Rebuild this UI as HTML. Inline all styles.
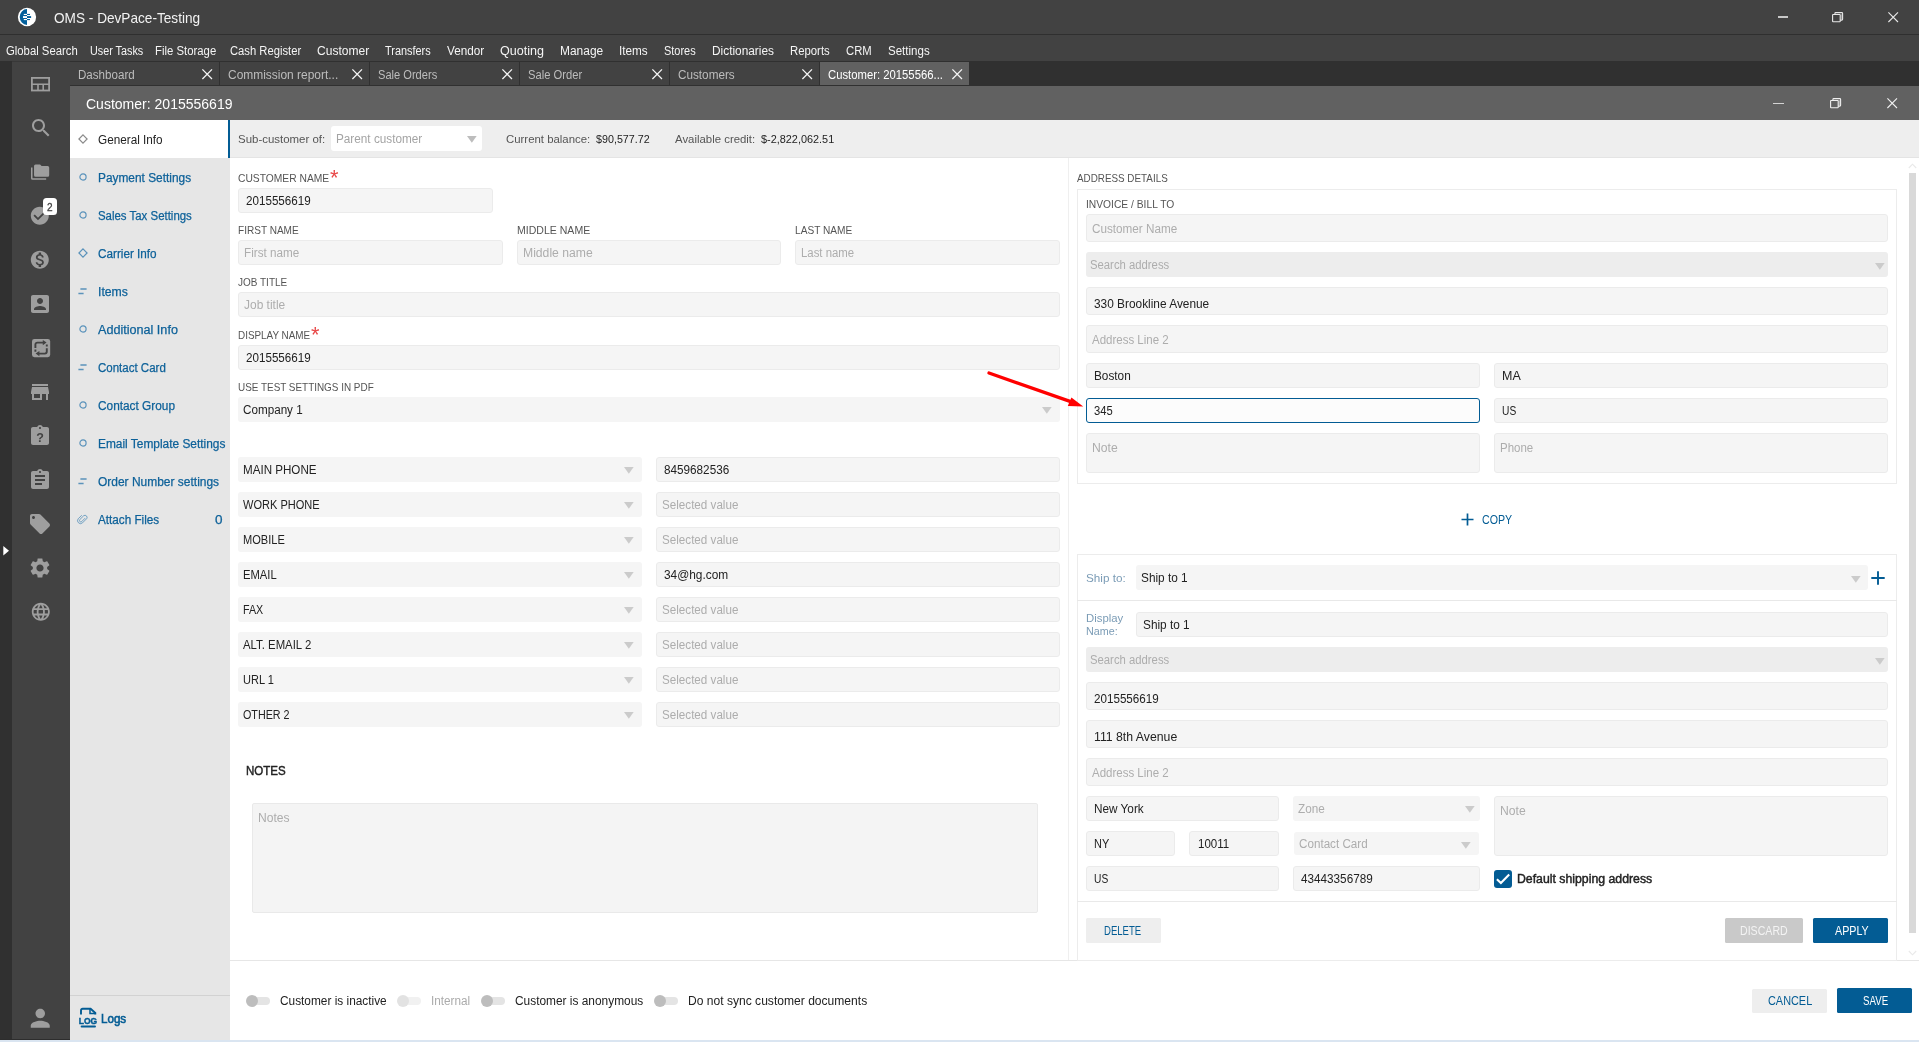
<!DOCTYPE html>
<html lang="en"><head><meta charset="utf-8"><title>OMS - DevPace-Testing</title>
<style>
html,body{margin:0;padding:0;}
body{width:1919px;height:1042px;overflow:hidden;background:#ffffff;position:relative;
font-family:"Liberation Sans",sans-serif;}
#app{position:absolute;left:0;top:0;width:1919px;height:1042px;overflow:hidden;will-change:transform;}
#app>div,#app>span,#app>svg{position:absolute;display:block;}
#app>span{white-space:pre;transform-origin:0 0;}
svg{overflow:visible;}
</style></head><body><div id="app">
<div style="left:0px;top:0px;width:1919px;height:34px;background:#424242;"></div>
<div style="left:0px;top:34px;width:1919px;height:1px;background:#2f2f2f;"></div>
<div style="left:0px;top:35px;width:1919px;height:26px;background:#424242;"></div>
<div style="left:0px;top:61px;width:12px;height:979px;background:#303030;"></div>
<div style="left:12px;top:61px;width:58px;height:979px;background:#424242;"></div>
<div style="left:70px;top:61px;width:1849px;height:25px;background:#303030;"></div>
<div style="left:12px;top:61px;width:58px;height:1px;background:#383838;"></div>
<div style="left:70px;top:86px;width:1849px;height:34px;background:#616161;"></div>
<div style="left:70px;top:120px;width:160px;height:920px;background:#e6e6e6;"></div>
<div style="left:230px;top:120px;width:1689px;height:38px;background:#eeeeee;"></div>
<div style="left:230px;top:157px;width:1689px;height:1px;background:#e4e4e4;"></div>
<div style="left:0px;top:1039px;width:70px;height:1px;background:#2d2d2d;"></div>
<div style="left:0px;top:1040px;width:1919px;height:2px;background:#dae5f1;"></div>
<svg style="left:17px;top:7px;" width="20" height="20" viewBox="0 0 20 20"><circle cx="10" cy="10" r="9.15" fill="#fff"/><path d="M10 2.1A7.3 7.9 0 0 0 10 17.9Z" fill="#03609c"/><rect x="6.8" y="6.9" width="3.2" height="1.1" fill="#fff"/><rect x="6" y="9.1" width="4" height="1.9" fill="#fff"/><rect x="6.8" y="12" width="3.2" height="1.1" fill="#fff"/><rect x="10" y="6.9" width="3" height="1.1" fill="#03609c"/><rect x="10" y="9.1" width="4.1" height="1.9" fill="#03609c"/><rect x="10" y="12" width="3" height="1.1" fill="#03609c"/></svg>
<span style="left:54.2px;top:11px;font-size:14.6px;line-height:14.6px;height:14.6px;color:#f2f2f2;transform:scaleX(0.9336);">OMS - DevPace-Testing</span>
<div style="left:1777.5px;top:16.4px;width:10.4px;height:1.5px;background:#e8e8e8;opacity:.8;"></div>
<svg style="left:1831.5px;top:11.7px;" width="12" height="11" viewBox="0 0 12 11"><rect x="0.6" y="2.5" width="7.6" height="7.3" rx="0.5" fill="none" stroke="#e8e8e8" stroke-width="1.1"/><path d="M2.9 2.5V1.4a0.8 0.8 0 0 1 .8-.8h6.1a0.8 0.8 0 0 1 .8.8v5.9a0.8 0.8 0 0 1-.8.8H8.2" fill="none" stroke="#e8e8e8" stroke-width="1.1"/><path d="M8.8 2.2h1.2v5.2H8.8z" fill="#e8e8e8" opacity=".45"/></svg>
<svg style="left:1887.5px;top:11.7px;" width="11" height="11" viewBox="0 0 11 11"><path d="M0.4 0.4L10 10M10 0.4L0.4 10" stroke="#e8e8e8" stroke-width="1.1" fill="none"/></svg>
<div style="left:1773.3px;top:102.5px;width:10.4px;height:1.5px;background:#f0f0f0;opacity:.8;"></div>
<svg style="left:1829.5px;top:97.8px;" width="12" height="11" viewBox="0 0 12 11"><rect x="0.6" y="2.5" width="7.6" height="7.3" rx="0.5" fill="none" stroke="#f0f0f0" stroke-width="1.1"/><path d="M2.9 2.5V1.4a0.8 0.8 0 0 1 .8-.8h6.1a0.8 0.8 0 0 1 .8.8v5.9a0.8 0.8 0 0 1-.8.8H8.2" fill="none" stroke="#f0f0f0" stroke-width="1.1"/><path d="M8.8 2.2h1.2v5.2H8.8z" fill="#f0f0f0" opacity=".45"/></svg>
<svg style="left:1887.1px;top:97.8px;" width="11" height="11" viewBox="0 0 11 11"><path d="M0.4 0.4L10 10M10 0.4L0.4 10" stroke="#f0f0f0" stroke-width="1.1" fill="none"/></svg>
<span style="left:6.2px;top:45px;font-size:12.5px;line-height:12.5px;height:12.5px;color:#f5f5f5;transform:scaleX(0.9052);">Global Search</span>
<span style="left:90.2px;top:45px;font-size:12.5px;line-height:12.5px;height:12.5px;color:#f5f5f5;transform:scaleX(0.8638);">User Tasks</span>
<span style="left:155.2px;top:45px;font-size:12.5px;line-height:12.5px;height:12.5px;color:#f5f5f5;transform:scaleX(0.9081);">File Storage</span>
<span style="left:230.2px;top:45px;font-size:12.5px;line-height:12.5px;height:12.5px;color:#f5f5f5;transform:scaleX(0.899);">Cash Register</span>
<span style="left:317.2px;top:45px;font-size:12.5px;line-height:12.5px;height:12.5px;color:#f5f5f5;transform:scaleX(0.9634);">Customer</span>
<span style="left:385.2px;top:45px;font-size:12.5px;line-height:12.5px;height:12.5px;color:#f5f5f5;transform:scaleX(0.8734);">Transfers</span>
<span style="left:447.2px;top:45px;font-size:12.5px;line-height:12.5px;height:12.5px;color:#f5f5f5;transform:scaleX(0.939);">Vendor</span>
<span style="left:500.2px;top:45px;font-size:12.5px;line-height:12.5px;height:12.5px;color:#f5f5f5;transform:scaleX(1.005);">Quoting</span>
<span style="left:560.2px;top:45px;font-size:12.5px;line-height:12.5px;height:12.5px;color:#f5f5f5;transform:scaleX(0.9563);">Manage</span>
<span style="left:619.2px;top:45px;font-size:12.5px;line-height:12.5px;height:12.5px;color:#f5f5f5;transform:scaleX(0.9391);">Items</span>
<span style="left:664.2px;top:45px;font-size:12.5px;line-height:12.5px;height:12.5px;color:#f5f5f5;transform:scaleX(0.8775);">Stores</span>
<span style="left:712.2px;top:45px;font-size:12.5px;line-height:12.5px;height:12.5px;color:#f5f5f5;transform:scaleX(0.9494);">Dictionaries</span>
<span style="left:790.2px;top:45px;font-size:12.5px;line-height:12.5px;height:12.5px;color:#f5f5f5;transform:scaleX(0.907);">Reports</span>
<span style="left:846.2px;top:45px;font-size:12.5px;line-height:12.5px;height:12.5px;color:#f5f5f5;transform:scaleX(0.9028);">CRM</span>
<span style="left:888.2px;top:45px;font-size:12.5px;line-height:12.5px;height:12.5px;color:#f5f5f5;transform:scaleX(0.9233);">Settings</span>
<div style="left:70px;top:62px;width:149px;height:23px;background:#424242;"></div>
<span style="left:78.2px;top:69px;font-size:12.5px;line-height:12.5px;height:12.5px;color:#bdbdbd;transform:scaleX(0.9272);">Dashboard</span>
<svg style="left:202px;top:69px;" width="10.5" height="10.5" viewBox="0 0 10.5 10.5"><path d="M0.4 0.4L10 10M10 0.4L0.4 10" stroke="#f4f4f4" stroke-width="1.3" fill="none"/></svg>
<div style="left:220px;top:62px;width:149px;height:23px;background:#424242;"></div>
<span style="left:228.2px;top:69px;font-size:12.5px;line-height:12.5px;height:12.5px;color:#bdbdbd;transform:scaleX(0.9557);">Commission report...</span>
<svg style="left:352px;top:69px;" width="10.5" height="10.5" viewBox="0 0 10.5 10.5"><path d="M0.4 0.4L10 10M10 0.4L0.4 10" stroke="#f4f4f4" stroke-width="1.3" fill="none"/></svg>
<div style="left:370px;top:62px;width:149px;height:23px;background:#424242;"></div>
<span style="left:378.2px;top:69px;font-size:12.5px;line-height:12.5px;height:12.5px;color:#bdbdbd;transform:scaleX(0.8876);">Sale Orders</span>
<svg style="left:502px;top:69px;" width="10.5" height="10.5" viewBox="0 0 10.5 10.5"><path d="M0.4 0.4L10 10M10 0.4L0.4 10" stroke="#f4f4f4" stroke-width="1.3" fill="none"/></svg>
<div style="left:520px;top:62px;width:149px;height:23px;background:#424242;"></div>
<span style="left:528.2px;top:69px;font-size:12.5px;line-height:12.5px;height:12.5px;color:#bdbdbd;transform:scaleX(0.8967);">Sale Order</span>
<svg style="left:652px;top:69px;" width="10.5" height="10.5" viewBox="0 0 10.5 10.5"><path d="M0.4 0.4L10 10M10 0.4L0.4 10" stroke="#f4f4f4" stroke-width="1.3" fill="none"/></svg>
<div style="left:670px;top:62px;width:149px;height:23px;background:#424242;"></div>
<span style="left:678.2px;top:69px;font-size:12.5px;line-height:12.5px;height:12.5px;color:#bdbdbd;transform:scaleX(0.9383);">Customers</span>
<svg style="left:802px;top:69px;" width="10.5" height="10.5" viewBox="0 0 10.5 10.5"><path d="M0.4 0.4L10 10M10 0.4L0.4 10" stroke="#f4f4f4" stroke-width="1.3" fill="none"/></svg>
<div style="left:820px;top:62px;width:149px;height:23px;background:#616161;"></div>
<span style="left:828.2px;top:69px;font-size:12.5px;line-height:12.5px;height:12.5px;color:#ffffff;transform:scaleX(0.9036);">Customer: 20155566...</span>
<svg style="left:952px;top:69px;" width="10.5" height="10.5" viewBox="0 0 10.5 10.5"><path d="M0.4 0.4L10 10M10 0.4L0.4 10" stroke="#f4f4f4" stroke-width="1.3" fill="none"/></svg>
<span style="left:86.2px;top:96px;font-size:15.0px;line-height:15.0px;height:15.0px;color:#ffffff;transform:scaleX(0.9345);">Customer: 2015556619</span>
<svg style="left:31px;top:77px;" width="19" height="14.5" viewBox="0 0 19 14.5"><rect x="0.9" y="0.9" width="17.2" height="12.6" fill="none" stroke="#9e9e9e" stroke-width="1.8"/><path d="M1 7.2H18M7 7.2V13.5M12.2 7.2V13.5" stroke="#9e9e9e" stroke-width="1.6" fill="none"/></svg>
<svg style="left:28.7px;top:116.3px;" width="24" height="24" viewBox="0 0 24 24"><path d="M15.5 14h-.79l-.28-.27C15.41 12.59 16 11.11 16 9.5 16 5.91 13.09 3 9.5 3S3 5.91 3 9.5 5.91 16 9.5 16c1.61 0 3.09-.59 4.23-1.57l.27.28v.79l5 4.99L20.49 19l-4.99-5zm-6 0C7.01 14 5 11.99 5 9.5S7.01 5 9.5 5 14 7.01 14 9.5 11.99 14 9.5 14z" fill="#9e9e9e"/></svg>
<svg style="left:31.3px;top:163.4px;" width="18.2" height="18.2" viewBox="0 0 24 24"><path d="M22,4H14L12,2H6A2,2 0 0,0 4,4V16A2,2 0 0,0 6,18H22A2,2 0 0,0 24,16V6A2,2 0 0,0 22,4M2,6H0V11H0V20A2,2 0 0,0 2,22H20V20H2V6Z" fill="#9e9e9e"/></svg>
<svg style="left:29.4px;top:205.4px;" width="21.6" height="21.6" viewBox="0 0 24 24"><path d="M12 2C6.48 2 2 6.48 2 12s4.48 10 10 10 10-4.48 10-10S17.52 2 12 2zm-2 15l-5-5 1.41-1.41L10 14.17l7.59-7.59L19 8l-9 9z" fill="#9e9e9e"/></svg>
<div style="left:42.5px;top:198px;width:14.5px;height:17px;background:#ffffff;border-radius:3.5px;"></div>
<span style="left:47.0px;top:202px;font-size:11.0px;line-height:11.0px;height:11.0px;color:#444444;transform:scaleX(0.9112);-webkit-text-stroke:0.3px #444;">2</span>
<svg style="left:29.4px;top:249.4px;" width="21.6" height="21.6" viewBox="0 0 24 24"><path d="M12 2C6.48 2 2 6.48 2 12s4.48 10 10 10 10-4.48 10-10S17.52 2 12 2zm1.41 16.09V20h-2.67v-1.93c-1.71-.36-3.16-1.46-3.27-3.4h1.96c.1 1.05.82 1.87 2.65 1.87 1.96 0 2.4-.98 2.4-1.59 0-.83-.44-1.61-2.67-2.14-2.48-.6-4.18-1.62-4.18-3.67 0-1.72 1.39-2.84 3.11-3.21V4h2.67v1.95c1.86.45 2.79 1.86 2.85 3.39H14.3c-.05-1.11-.64-1.87-2.22-1.87-1.5 0-2.4.68-2.4 1.64 0 .84.65 1.39 2.67 1.91s4.18 1.39 4.18 3.91c-.01 1.83-1.38 2.83-3.12 3.16z" fill="#9e9e9e"/></svg>
<svg style="left:28.25px;top:292.0px;" width="24" height="24" viewBox="0 0 24 24"><path d="M3 5v14c0 1.1.89 2 2 2h14c1.1 0 2-.9 2-2V5c0-1.1-.9-2-2-2H5c-1.11 0-2 .9-2 2zm12 4c0 1.66-1.34 3-3 3s-3-1.34-3-3 1.34-3 3-3 3 1.34 3 3zm-9 8c0-2 4-3.1 6-3.1s6 1.1 6 3.1v1H6v-1z" fill="#9e9e9e"/></svg>
<svg style="left:31.5px;top:339px;" width="18.2" height="18.2" viewBox="0 0 18.2 18.2"><rect x="0" y="0" width="18.2" height="18.2" rx="2.4" fill="#9e9e9e"/><path d="M3.4 9V5.6a2 2 0 0 1 2-2H11.6M14.8 9.2V12.6a2 2 0 0 1-2 2H6.6" fill="none" stroke="#424242" stroke-width="1.9"/><path d="M10.8 0.9L14.6 3.6L10.8 6.3ZM7.4 11.9L3.6 14.6L7.4 17.3Z" fill="#424242"/><path d="M14.8 5.4V7.6M3.4 12.8V10.6" stroke="#424242" stroke-width="1.9"/></svg>
<svg style="left:28.25px;top:380.0px;" width="24" height="24" viewBox="0 0 24 24"><path d="M20 4H4v2h16V4zm1 10v-2l-1-5H4l-1 5v2h1v6h10v-6h4v6h2v-6h1zm-9 4H6v-4h6v4z" fill="#9e9e9e"/></svg>
<svg style="left:28.25px;top:423.6px;" width="24" height="24" viewBox="0 0 24 24"><path d="M19 3h-4.18C14.4 1.84 13.3 1 12 1c-1.3 0-2.4.84-2.82 2H5c-1.1 0-2 .9-2 2v14c0 1.1.9 2 2 2h14c1.1 0 2-.9 2-2V5c0-1.1-.9-2-2-2zm-7 0c.55 0 1 .45 1 1s-.45 1-1 1-1-.45-1-1 .45-1 1-1z" fill="#9e9e9e"/><text x="12" y="18" text-anchor="middle" font-family="Liberation Sans, sans-serif" font-weight="700" font-size="12.5" fill="#424242">?</text></svg>
<svg style="left:28.25px;top:468.2px;" width="24" height="24" viewBox="0 0 24 24"><path d="M19 3h-4.18C14.4 1.84 13.3 1 12 1c-1.3 0-2.4.84-2.82 2H5c-1.1 0-2 .9-2 2v14c0 1.1.9 2 2 2h14c1.1 0 2-.9 2-2V5c0-1.1-.9-2-2-2zm-7 0c.55 0 1 .45 1 1s-.45 1-1 1-1-.45-1-1 .45-1 1-1zm2 14H7v-2h7v2zm3-4H7v-2h10v2zm0-4H7V7h10v2z" fill="#9e9e9e"/></svg>
<svg style="left:28.25px;top:512.0px;" width="24" height="24" viewBox="0 0 24 24"><path d="M21.41 11.58l-9-9C12.05 2.22 11.55 2 11 2H4c-1.1 0-2 .9-2 2v7c0 .55.22 1.05.59 1.42l9 9c.36.36.86.58 1.41.58.55 0 1.05-.22 1.41-.59l7-7c.37-.36.59-.86.59-1.41 0-.55-.23-1.06-.59-1.42zM5.5 7C4.67 7 4 6.33 4 5.5S4.67 4 5.5 4 7 4.67 7 5.5 6.33 7 5.5 7z" fill="#9e9e9e"/></svg>
<svg style="left:28.25px;top:556.2px;" width="24" height="24" viewBox="0 0 24 24"><path d="M19.14 12.94c.04-.3.06-.61.06-.94 0-.32-.02-.64-.07-.94l2.03-1.58c.18-.14.23-.41.12-.61l-1.92-3.32c-.12-.22-.37-.29-.59-.22l-2.39.96c-.5-.38-1.03-.7-1.62-.94l-.36-2.54c-.04-.24-.24-.41-.48-.41h-3.84c-.24 0-.43.17-.47.41l-.36 2.54c-.59.24-1.13.57-1.62.94l-2.39-.96c-.22-.08-.47 0-.59.22L2.74 8.87c-.12.21-.08.47.12.61l2.03 1.58c-.05.3-.09.63-.09.94s.02.64.07.94l-2.03 1.58c-.18.14-.23.41-.12.61l1.92 3.32c.12.22.37.29.59.22l2.39-.96c.5.38 1.03.7 1.62.94l.36 2.54c.05.24.24.41.48.41h3.84c.24 0 .44-.17.47-.41l.36-2.54c.59-.24 1.13-.56 1.62-.94l2.39.96c.22.08.47 0 .59-.22l1.92-3.32c.12-.22.07-.47-.12-.61l-2.01-1.58zM12 15.6c-1.98 0-3.6-1.62-3.6-3.6s1.62-3.6 3.6-3.6 3.6 1.62 3.6 3.6-1.62 3.6-3.6 3.6z" fill="#9e9e9e"/></svg>
<svg style="left:29.6px;top:601.4px;" width="21.6" height="21.6" viewBox="0 0 24 24"><path d="M11.99 2C6.47 2 2 6.48 2 12s4.47 10 9.99 10C17.52 22 22 17.52 22 12S17.52 2 11.99 2zm6.93 6h-2.95c-.32-1.25-.78-2.45-1.38-3.56 1.84.63 3.37 1.91 4.33 3.56zM12 4.04c.83 1.2 1.48 2.53 1.91 3.96h-3.82c.43-1.43 1.08-2.76 1.91-3.96zM4.26 14C4.1 13.36 4 12.69 4 12s.1-1.36.26-2h3.38c-.08.66-.14 1.32-.14 2 0 .68.06 1.34.14 2H4.26zm.82 2h2.95c.32 1.25.78 2.45 1.38 3.56-1.84-.63-3.37-1.9-4.33-3.56zm2.95-8H5.08c.96-1.66 2.49-2.93 4.33-3.56C8.81 5.55 8.35 6.75 8.03 8zM12 19.96c-.83-1.2-1.48-2.53-1.91-3.96h3.82c-.43 1.43-1.08 2.76-1.91 3.96zM14.34 14H9.66c-.09-.66-.16-1.32-.16-2 0-.68.07-1.35.16-2h4.68c.09.65.16 1.32.16 2 0 .68-.07 1.34-.16 2zm.25 5.56c.6-1.11 1.06-2.31 1.38-3.56h2.95c-.96 1.65-2.49 2.93-4.33 3.56zM16.36 14c.08-.66.14-1.32.14-2 0-.68-.06-1.34-.14-2h3.38c.16.64.26 1.31.26 2s-.1 1.36-.26 2h-3.38z" fill="#9e9e9e"/></svg>
<svg style="left:26.25px;top:1003.75px;" width="28.5" height="28.5" viewBox="0 0 24 24"><path d="M12 12c2.21 0 4-1.79 4-4s-1.79-4-4-4-4 1.79-4 4 1.79 4 4 4zm0 2c-2.67 0-8 1.34-8 4v2h16v-2c0-2.66-5.33-4-8-4z" fill="#9e9e9e"/></svg>
<svg style="left:2.5px;top:546px;" width="6.5" height="10" viewBox="0 0 6.5 10"><path d="M0.3 0L6 4.8L0.3 9.6Z" fill="#ffffff"/></svg>
<div style="left:70px;top:120px;width:158px;height:38px;background:#ffffff;"></div>
<div style="left:228px;top:120px;width:2px;height:38px;background:#035c94;"></div>
<svg style="left:77.5px;top:134px;" width="10" height="10" viewBox="0 0 10 10"><path d="M5 0.9L9.1 5L5 9.1L0.9 5Z" fill="none" stroke="#8a8a8a" stroke-width="1.2"/></svg>
<span style="left:98.2px;top:134px;font-size:12.5px;line-height:12.5px;height:12.5px;color:#222;transform:scaleX(0.9391);">General Info</span>
<svg style="left:77.5px;top:172px;" width="10" height="10" viewBox="0 0 10 10"><circle cx="5" cy="5" r="3.1" fill="none" stroke="#5b93bb" stroke-width="1.2"/></svg>
<span style="left:98.2px;top:172px;font-size:12.5px;line-height:12.5px;height:12.5px;color:#0d6199;transform:scaleX(0.9503);-webkit-text-stroke:0.25px #0d6199;">Payment Settings</span>
<svg style="left:77.5px;top:210px;" width="10" height="10" viewBox="0 0 10 10"><circle cx="5" cy="5" r="3.1" fill="none" stroke="#5b93bb" stroke-width="1.2"/></svg>
<span style="left:98.2px;top:210px;font-size:12.5px;line-height:12.5px;height:12.5px;color:#0d6199;transform:scaleX(0.9142);-webkit-text-stroke:0.25px #0d6199;">Sales Tax Settings</span>
<svg style="left:77.5px;top:248px;" width="10" height="10" viewBox="0 0 10 10"><path d="M5 0.9L9.1 5L5 9.1L0.9 5Z" fill="none" stroke="#5b93bb" stroke-width="1.2"/></svg>
<span style="left:98.2px;top:248px;font-size:12.5px;line-height:12.5px;height:12.5px;color:#0d6199;transform:scaleX(0.9373);-webkit-text-stroke:0.25px #0d6199;">Carrier Info</span>
<svg style="left:78px;top:287.6px;" width="9" height="7" viewBox="0 0 9 7"><path d="M2.4 1H8.6M0.4 5.5H5.6" stroke="#5b93bb" stroke-width="1.35" fill="none"/></svg>
<span style="left:98.2px;top:286px;font-size:12.5px;line-height:12.5px;height:12.5px;color:#0d6199;transform:scaleX(0.9784);-webkit-text-stroke:0.25px #0d6199;">Items</span>
<svg style="left:77.5px;top:324px;" width="10" height="10" viewBox="0 0 10 10"><circle cx="5" cy="5" r="3.1" fill="none" stroke="#5b93bb" stroke-width="1.2"/></svg>
<span style="left:98.2px;top:324px;font-size:12.5px;line-height:12.5px;height:12.5px;color:#0d6199;transform:scaleX(1.0085);-webkit-text-stroke:0.25px #0d6199;">Additional Info</span>
<svg style="left:78px;top:363.6px;" width="9" height="7" viewBox="0 0 9 7"><path d="M2.4 1H8.6M0.4 5.5H5.6" stroke="#5b93bb" stroke-width="1.35" fill="none"/></svg>
<span style="left:98.2px;top:362px;font-size:12.5px;line-height:12.5px;height:12.5px;color:#0d6199;transform:scaleX(0.9206);-webkit-text-stroke:0.25px #0d6199;">Contact Card</span>
<svg style="left:77.5px;top:400px;" width="10" height="10" viewBox="0 0 10 10"><circle cx="5" cy="5" r="3.1" fill="none" stroke="#5b93bb" stroke-width="1.2"/></svg>
<span style="left:98.2px;top:400px;font-size:12.5px;line-height:12.5px;height:12.5px;color:#0d6199;transform:scaleX(0.9472);-webkit-text-stroke:0.25px #0d6199;">Contact Group</span>
<svg style="left:77.5px;top:438px;" width="10" height="10" viewBox="0 0 10 10"><circle cx="5" cy="5" r="3.1" fill="none" stroke="#5b93bb" stroke-width="1.2"/></svg>
<span style="left:98.2px;top:438px;font-size:12.5px;line-height:12.5px;height:12.5px;color:#0d6199;transform:scaleX(0.9517);-webkit-text-stroke:0.25px #0d6199;">Email Template Settings</span>
<svg style="left:78px;top:477.6px;" width="9" height="7" viewBox="0 0 9 7"><path d="M2.4 1H8.6M0.4 5.5H5.6" stroke="#5b93bb" stroke-width="1.35" fill="none"/></svg>
<span style="left:98.2px;top:476px;font-size:12.5px;line-height:12.5px;height:12.5px;color:#0d6199;transform:scaleX(0.9578);-webkit-text-stroke:0.25px #0d6199;">Order Number settings</span>
<svg style="left:77px;top:513.5px;" width="11" height="11" viewBox="0 0 11 11"><path d="M8.6 4.2L4.8 8a1.5 1.5 0 0 1-2.1-2.1L7 1.6a2.3 2.3 0 0 1 3.2 3.2L5.6 9.4a3.2 3.2 0 0 1-4.5-4.5L4.9 1.1" transform="translate(0.2,0.2) scale(0.93)" fill="none" stroke="#5b93bb" stroke-width="0.9"/></svg>
<span style="left:98.2px;top:514px;font-size:12.5px;line-height:12.5px;height:12.5px;color:#0d6199;transform:scaleX(0.9372);-webkit-text-stroke:0.25px #0d6199;">Attach Files</span>
<span style="left:215.4px;top:514px;font-size:12.5px;line-height:12.5px;height:12.5px;color:#0d6199;transform:scaleX(1.0788);-webkit-text-stroke:0.25px #0d6199;">0</span>
<div style="left:70px;top:995px;width:160px;height:1px;background:#d2d2d2;"></div>
<svg style="left:79px;top:1007px;" width="19" height="21" viewBox="0 0 19 21"><path d="M2 7.4V3.4a1.6 1.6 0 0 1 1.6-1.6H11.6L16.3 6V7.4" fill="none" stroke="#035c94" stroke-width="1.9"/><path d="M11 1.8V6.6H16.4" fill="none" stroke="#035c94" stroke-width="1.5"/><path d="M2.6 19.5H16" fill="none" stroke="#035c94" stroke-width="1.9" stroke-linecap="round"/><text x="-0.2" y="16.8" font-family="Liberation Sans, sans-serif" font-weight="700" font-size="9.6" textLength="18.4" lengthAdjust="spacingAndGlyphs" fill="#035c94" stroke="#035c94" stroke-width="0.45">LOG</text></svg>
<span style="left:101.4px;top:1013px;font-size:12.4px;line-height:12.4px;height:12.4px;color:#035c94;transform:scaleX(0.9372);-webkit-text-stroke:0.6px #035c94;">Logs</span>
<span style="left:238.2px;top:134px;font-size:11.5px;line-height:11.5px;height:11.5px;color:#555555;transform:scaleX(0.9958);">Sub-customer of:</span>
<div style="left:330.5px;top:126px;width:151px;height:24.5px;background:#ffffff;border-radius:3px;"></div>
<span style="left:336.2px;top:133px;font-size:12.5px;line-height:12.5px;height:12.5px;color:#a4a4a4;transform:scaleX(0.94);">Parent customer</span>
<svg style="left:467px;top:136px;" width="9.7" height="6.7" viewBox="0 0 9.7 6.7"><path d="M0 0H9.7L4.85 6.7Z" fill="#bdbdbd"/></svg>
<span style="left:506.2px;top:134px;font-size:11.5px;line-height:11.5px;height:11.5px;color:#555555;transform:scaleX(0.9904);">Current balance:</span>
<span style="left:596.2px;top:134px;font-size:11.5px;line-height:11.5px;height:11.5px;color:#222222;transform:scaleX(0.933);">$90,577.72</span>
<span style="left:675.2px;top:134px;font-size:11.5px;line-height:11.5px;height:11.5px;color:#555555;transform:scaleX(0.9905);">Available credit:</span>
<span style="left:761.2px;top:134px;font-size:11.5px;line-height:11.5px;height:11.5px;color:#222222;transform:scaleX(0.9461);">$-2,822,062.51</span>
<span style="left:238.2px;top:173px;font-size:11.5px;line-height:11.5px;height:11.5px;color:#555555;transform:scaleX(0.894);">CUSTOMER NAME</span>
<span style="left:329.9px;top:167px;font-size:21.9px;line-height:21.9px;height:21.9px;color:#e84848;transform:scaleX(0.9973);">*</span>
<div style="left:238px;top:188px;width:254.5px;height:24.5px;background:#f5f5f5;border:1px solid #ebebeb;box-sizing:border-box;border-radius:3px;"></div>
<span style="left:246.2px;top:195px;font-size:12.5px;line-height:12.5px;height:12.5px;color:#222222;transform:scaleX(0.9307);">2015556619</span>
<span style="left:238.2px;top:225px;font-size:11.5px;line-height:11.5px;height:11.5px;color:#555555;transform:scaleX(0.8742);">FIRST NAME</span>
<span style="left:517.2px;top:225px;font-size:11.5px;line-height:11.5px;height:11.5px;color:#555555;transform:scaleX(0.9165);">MIDDLE NAME</span>
<span style="left:795.2px;top:225px;font-size:11.5px;line-height:11.5px;height:11.5px;color:#555555;transform:scaleX(0.8804);">LAST NAME</span>
<div style="left:238px;top:240px;width:264.5px;height:24.5px;background:#f5f5f5;border:1px solid #ebebeb;box-sizing:border-box;border-radius:3px;"></div>
<span style="left:243.5px;top:247px;font-size:12.5px;line-height:12.5px;height:12.5px;color:#adadad;transform:scaleX(0.935);">First name</span>
<div style="left:517px;top:240px;width:263.5px;height:24.5px;background:#f5f5f5;border:1px solid #ebebeb;box-sizing:border-box;border-radius:3px;"></div>
<span style="left:522.5px;top:247px;font-size:12.5px;line-height:12.5px;height:12.5px;color:#adadad;transform:scaleX(0.974);">Middle name</span>
<div style="left:795px;top:240px;width:265px;height:24.5px;background:#f5f5f5;border:1px solid #ebebeb;box-sizing:border-box;border-radius:3px;"></div>
<span style="left:800.5px;top:247px;font-size:12.5px;line-height:12.5px;height:12.5px;color:#adadad;transform:scaleX(0.9115);">Last name</span>
<span style="left:238.2px;top:277px;font-size:11.5px;line-height:11.5px;height:11.5px;color:#555555;transform:scaleX(0.8683);">JOB TITLE</span>
<div style="left:238px;top:292px;width:822px;height:24.5px;background:#f5f5f5;border:1px solid #ebebeb;box-sizing:border-box;border-radius:3px;"></div>
<span style="left:243.5px;top:299px;font-size:12.5px;line-height:12.5px;height:12.5px;color:#adadad;transform:scaleX(0.9564);">Job title</span>
<span style="left:238.2px;top:330px;font-size:11.5px;line-height:11.5px;height:11.5px;color:#555555;transform:scaleX(0.8602);">DISPLAY NAME</span>
<span style="left:310.9px;top:324px;font-size:21.9px;line-height:21.9px;height:21.9px;color:#e84848;transform:scaleX(0.9973);">*</span>
<div style="left:238px;top:345px;width:822px;height:24.5px;background:#f5f5f5;border:1px solid #ebebeb;box-sizing:border-box;border-radius:3px;"></div>
<span style="left:246.2px;top:352px;font-size:12.5px;line-height:12.5px;height:12.5px;color:#222222;transform:scaleX(0.9307);">2015556619</span>
<span style="left:238.2px;top:382px;font-size:11.5px;line-height:11.5px;height:11.5px;color:#555555;transform:scaleX(0.8621);">USE TEST SETTINGS IN PDF</span>
<div style="left:238px;top:397px;width:822px;height:24.5px;background:#f5f5f5;border-radius:3px;"></div>
<span style="left:243.2px;top:404px;font-size:12.5px;line-height:12.5px;height:12.5px;color:#222222;transform:scaleX(0.9339);">Company 1</span>
<svg style="left:1042px;top:407px;" width="9.7" height="6.7" viewBox="0 0 9.7 6.7"><path d="M0 0H9.7L4.85 6.7Z" fill="#cbcbcb"/></svg>
<div style="left:238px;top:457px;width:403.5px;height:24.5px;background:#f5f5f5;border-radius:3px;"></div>
<span style="left:243.2px;top:464px;font-size:12.5px;line-height:12.5px;height:12.5px;color:#222222;transform:scaleX(0.9283);">MAIN PHONE</span>
<svg style="left:624px;top:466.5px;" width="9.7" height="6.7" viewBox="0 0 9.7 6.7"><path d="M0 0H9.7L4.85 6.7Z" fill="#cbcbcb"/></svg>
<div style="left:656px;top:457px;width:404px;height:24.5px;background:#f5f5f5;border:1px solid #ebebeb;box-sizing:border-box;border-radius:3px;"></div>
<span style="left:664.2px;top:464px;font-size:12.5px;line-height:12.5px;height:12.5px;color:#222222;transform:scaleX(0.9379);">8459682536</span>
<div style="left:238px;top:492px;width:403.5px;height:24.5px;background:#f5f5f5;border-radius:3px;"></div>
<span style="left:243.2px;top:499px;font-size:12.5px;line-height:12.5px;height:12.5px;color:#222222;transform:scaleX(0.8835);">WORK PHONE</span>
<svg style="left:624px;top:501.5px;" width="9.7" height="6.7" viewBox="0 0 9.7 6.7"><path d="M0 0H9.7L4.85 6.7Z" fill="#cbcbcb"/></svg>
<div style="left:656px;top:492px;width:404px;height:24.5px;background:#f5f5f5;border:1px solid #ebebeb;box-sizing:border-box;border-radius:3px;"></div>
<span style="left:661.5px;top:499px;font-size:12.5px;line-height:12.5px;height:12.5px;color:#adadad;transform:scaleX(0.9317);">Selected value</span>
<div style="left:238px;top:527px;width:403.5px;height:24.5px;background:#f5f5f5;border-radius:3px;"></div>
<span style="left:243.2px;top:534px;font-size:12.5px;line-height:12.5px;height:12.5px;color:#222222;transform:scaleX(0.8849);">MOBILE</span>
<svg style="left:624px;top:536.5px;" width="9.7" height="6.7" viewBox="0 0 9.7 6.7"><path d="M0 0H9.7L4.85 6.7Z" fill="#cbcbcb"/></svg>
<div style="left:656px;top:527px;width:404px;height:24.5px;background:#f5f5f5;border:1px solid #ebebeb;box-sizing:border-box;border-radius:3px;"></div>
<span style="left:661.5px;top:534px;font-size:12.5px;line-height:12.5px;height:12.5px;color:#adadad;transform:scaleX(0.9317);">Selected value</span>
<div style="left:238px;top:562px;width:403.5px;height:24.5px;background:#f5f5f5;border-radius:3px;"></div>
<span style="left:243.2px;top:569px;font-size:12.5px;line-height:12.5px;height:12.5px;color:#222222;transform:scaleX(0.8984);">EMAIL</span>
<svg style="left:624px;top:571.5px;" width="9.7" height="6.7" viewBox="0 0 9.7 6.7"><path d="M0 0H9.7L4.85 6.7Z" fill="#cbcbcb"/></svg>
<div style="left:656px;top:562px;width:404px;height:24.5px;background:#f5f5f5;border:1px solid #ebebeb;box-sizing:border-box;border-radius:3px;"></div>
<span style="left:664.2px;top:569px;font-size:12.5px;line-height:12.5px;height:12.5px;color:#222222;transform:scaleX(0.9499);">34@hg.com</span>
<div style="left:238px;top:597px;width:403.5px;height:24.5px;background:#f5f5f5;border-radius:3px;"></div>
<span style="left:243.2px;top:604px;font-size:12.5px;line-height:12.5px;height:12.5px;color:#222222;transform:scaleX(0.8552);">FAX</span>
<svg style="left:624px;top:606.5px;" width="9.7" height="6.7" viewBox="0 0 9.7 6.7"><path d="M0 0H9.7L4.85 6.7Z" fill="#cbcbcb"/></svg>
<div style="left:656px;top:597px;width:404px;height:24.5px;background:#f5f5f5;border:1px solid #ebebeb;box-sizing:border-box;border-radius:3px;"></div>
<span style="left:661.5px;top:604px;font-size:12.5px;line-height:12.5px;height:12.5px;color:#adadad;transform:scaleX(0.9317);">Selected value</span>
<div style="left:238px;top:632px;width:403.5px;height:24.5px;background:#f5f5f5;border-radius:3px;"></div>
<span style="left:243.2px;top:639px;font-size:12.5px;line-height:12.5px;height:12.5px;color:#222222;transform:scaleX(0.909);">ALT. EMAIL 2</span>
<svg style="left:624px;top:641.5px;" width="9.7" height="6.7" viewBox="0 0 9.7 6.7"><path d="M0 0H9.7L4.85 6.7Z" fill="#cbcbcb"/></svg>
<div style="left:656px;top:632px;width:404px;height:24.5px;background:#f5f5f5;border:1px solid #ebebeb;box-sizing:border-box;border-radius:3px;"></div>
<span style="left:661.5px;top:639px;font-size:12.5px;line-height:12.5px;height:12.5px;color:#adadad;transform:scaleX(0.9317);">Selected value</span>
<div style="left:238px;top:667px;width:403.5px;height:24.5px;background:#f5f5f5;border-radius:3px;"></div>
<span style="left:243.2px;top:674px;font-size:12.5px;line-height:12.5px;height:12.5px;color:#222222;transform:scaleX(0.8808);">URL 1</span>
<svg style="left:624px;top:676.5px;" width="9.7" height="6.7" viewBox="0 0 9.7 6.7"><path d="M0 0H9.7L4.85 6.7Z" fill="#cbcbcb"/></svg>
<div style="left:656px;top:667px;width:404px;height:24.5px;background:#f5f5f5;border:1px solid #ebebeb;box-sizing:border-box;border-radius:3px;"></div>
<span style="left:661.5px;top:674px;font-size:12.5px;line-height:12.5px;height:12.5px;color:#adadad;transform:scaleX(0.9317);">Selected value</span>
<div style="left:238px;top:702px;width:403.5px;height:24.5px;background:#f5f5f5;border-radius:3px;"></div>
<span style="left:243.2px;top:709px;font-size:12.5px;line-height:12.5px;height:12.5px;color:#222222;transform:scaleX(0.8602);">OTHER 2</span>
<svg style="left:624px;top:711.5px;" width="9.7" height="6.7" viewBox="0 0 9.7 6.7"><path d="M0 0H9.7L4.85 6.7Z" fill="#cbcbcb"/></svg>
<div style="left:656px;top:702px;width:404px;height:24.5px;background:#f5f5f5;border:1px solid #ebebeb;box-sizing:border-box;border-radius:3px;"></div>
<span style="left:661.5px;top:709px;font-size:12.5px;line-height:12.5px;height:12.5px;color:#adadad;transform:scaleX(0.9317);">Selected value</span>
<span style="left:246.2px;top:764px;font-size:13.0px;line-height:13.0px;height:13.0px;color:#222222;transform:scaleX(0.8865);-webkit-text-stroke:0.45px #222;">NOTES</span>
<div style="left:252px;top:803px;width:786px;height:109.5px;background:#f4f4f4;border:1px solid #e9e9e9;box-sizing:border-box;border-radius:2px;"></div>
<span style="left:258.2px;top:812px;font-size:12.5px;line-height:12.5px;height:12.5px;color:#adadad;transform:scaleX(0.9677);">Notes</span>
<div style="left:1067.7px;top:158px;width:1.3px;height:802px;background:#efefef;"></div>
<div style="left:230px;top:959.5px;width:1689px;height:1.2px;background:#e6e6e6;"></div>
<div style="left:248px;top:997px;width:22px;height:7.5px;background:#e4e4e4;border-radius:4px;"></div>
<div style="left:246px;top:995px;width:11.5px;height:11.5px;background:#bdbdbd;border-radius:6px;"></div>
<span style="left:280.0px;top:995px;font-size:12.5px;line-height:12.5px;height:12.5px;color:#222222;transform:scaleX(0.9481);">Customer is inactive</span>
<div style="left:399px;top:997px;width:22px;height:7.5px;background:#f1f1f1;border-radius:4px;"></div>
<div style="left:397px;top:995px;width:11.5px;height:11.5px;background:#e2e2e2;border-radius:6px;"></div>
<span style="left:430.6px;top:995px;font-size:12.5px;line-height:12.5px;height:12.5px;color:#ababab;transform:scaleX(0.9402);">Internal</span>
<div style="left:483px;top:997px;width:22px;height:7.5px;background:#e4e4e4;border-radius:4px;"></div>
<div style="left:481px;top:995px;width:11.5px;height:11.5px;background:#bdbdbd;border-radius:6px;"></div>
<span style="left:515.0px;top:995px;font-size:12.5px;line-height:12.5px;height:12.5px;color:#222222;transform:scaleX(0.9512);">Customer is anonymous</span>
<div style="left:656px;top:997px;width:22px;height:7.5px;background:#e4e4e4;border-radius:4px;"></div>
<div style="left:654px;top:995px;width:11.5px;height:11.5px;background:#bdbdbd;border-radius:6px;"></div>
<span style="left:687.5px;top:995px;font-size:12.5px;line-height:12.5px;height:12.5px;color:#222222;transform:scaleX(0.966);">Do not sync customer documents</span>
<div style="left:1752px;top:988.5px;width:75px;height:24.7px;background:#eeeeee;border-radius:1.5px;"></div>
<span style="left:1767.7px;top:995px;font-size:12.0px;line-height:12.0px;height:12.0px;color:#035c94;transform:scaleX(0.908);">CANCEL</span>
<div style="left:1837.2px;top:988px;width:75px;height:24.7px;background:#035c94;border-radius:1.5px;"></div>
<span style="left:1862.7px;top:995px;font-size:12.0px;line-height:12.0px;height:12.0px;color:#ffffff;transform:scaleX(0.8096);">SAVE</span>
<span style="left:1077.2px;top:173px;font-size:11.5px;line-height:11.5px;height:11.5px;color:#555555;transform:scaleX(0.8567);">ADDRESS DETAILS</span>
<div style="left:1076.5px;top:188.5px;width:820.5px;height:295px;border:1px solid #ececec;box-sizing:border-box;"></div>
<span style="left:1086.2px;top:199px;font-size:11.5px;line-height:11.5px;height:11.5px;color:#555555;transform:scaleX(0.8923);">INVOICE / BILL TO</span>
<div style="left:1086px;top:214px;width:802px;height:28px;background:#f5f5f5;border:1px solid #ebebeb;box-sizing:border-box;border-radius:3px;"></div>
<span style="left:1091.5px;top:223px;font-size:12.5px;line-height:12.5px;height:12.5px;color:#adadad;transform:scaleX(0.9363);">Customer Name</span>
<div style="left:1086px;top:252px;width:802px;height:24.5px;background:#ededed;border-radius:3px;"></div>
<span style="left:1089.9px;top:259px;font-size:12.5px;line-height:12.5px;height:12.5px;color:#adadad;transform:scaleX(0.9046);">Search address</span>
<svg style="left:1875px;top:262.5px;" width="9.7" height="6.7" viewBox="0 0 9.7 6.7"><path d="M0 0H9.7L4.85 6.7Z" fill="#cbcbcb"/></svg>
<div style="left:1086px;top:287px;width:802px;height:27.5px;background:#f5f5f5;border:1px solid #ebebeb;box-sizing:border-box;border-radius:3px;"></div>
<span style="left:1094.2px;top:298px;font-size:12.5px;line-height:12.5px;height:12.5px;color:#222222;transform:scaleX(0.949);">330 Brookline Avenue</span>
<div style="left:1086px;top:325px;width:802px;height:27.5px;background:#f5f5f5;border:1px solid #ebebeb;box-sizing:border-box;border-radius:3px;"></div>
<span style="left:1091.5px;top:334px;font-size:12.5px;line-height:12.5px;height:12.5px;color:#adadad;transform:scaleX(0.9198);">Address Line 2</span>
<div style="left:1086px;top:363px;width:394px;height:24.5px;background:#f5f5f5;border:1px solid #ebebeb;box-sizing:border-box;border-radius:3px;"></div>
<span style="left:1094.2px;top:370px;font-size:12.5px;line-height:12.5px;height:12.5px;color:#222222;transform:scaleX(0.9431);">Boston</span>
<div style="left:1494px;top:363px;width:394px;height:24.5px;background:#f5f5f5;border:1px solid #ebebeb;box-sizing:border-box;border-radius:3px;"></div>
<span style="left:1502.2px;top:370px;font-size:12.5px;line-height:12.5px;height:12.5px;color:#222222;transform:scaleX(0.9973);">MA</span>
<div style="left:1086px;top:398px;width:394px;height:24.5px;background:#fcfcfc;border:1px solid #035c94;box-sizing:border-box;border-radius:3px;"></div>
<span style="left:1094.2px;top:405px;font-size:12.5px;line-height:12.5px;height:12.5px;color:#222222;transform:scaleX(0.8966);">345</span>
<div style="left:1494px;top:398px;width:394px;height:24.5px;background:#f5f5f5;border:1px solid #ebebeb;box-sizing:border-box;border-radius:3px;"></div>
<span style="left:1502.2px;top:405px;font-size:12.5px;line-height:12.5px;height:12.5px;color:#222222;transform:scaleX(0.8178);">US</span>
<div style="left:1086px;top:433px;width:394px;height:39.5px;background:#f5f5f5;border:1px solid #ebebeb;box-sizing:border-box;border-radius:3px;"></div>
<span style="left:1091.5px;top:442px;font-size:12.5px;line-height:12.5px;height:12.5px;color:#adadad;transform:scaleX(0.9733);">Note</span>
<div style="left:1494px;top:433px;width:394px;height:39.5px;background:#f5f5f5;border:1px solid #ebebeb;box-sizing:border-box;border-radius:3px;"></div>
<span style="left:1499.5px;top:442px;font-size:12.5px;line-height:12.5px;height:12.5px;color:#adadad;transform:scaleX(0.9185);">Phone</span>
<svg style="left:1461px;top:513px;" width="13" height="13" viewBox="0 0 13 13"><path d="M6.5 0.5V12.5M0.5 6.5H12.5" stroke="#035c94" stroke-width="1.7" fill="none"/></svg>
<span style="left:1481.7px;top:514px;font-size:12.5px;line-height:12.5px;height:12.5px;color:#035c94;transform:scaleX(0.8525);">COPY</span>
<div style="left:1076.5px;top:554px;width:820.5px;height:406.5px;border:1px solid #ececec;box-sizing:border-box;"></div>
<div style="left:1077px;top:600px;width:819.5px;height:1.2px;background:#e8e8e8;"></div>
<div style="left:1077px;top:901px;width:819.5px;height:1px;background:#e9e9e9;"></div>
<span style="left:1086.2px;top:573px;font-size:11.5px;line-height:11.5px;height:11.5px;color:#7b9cb6;transform:scaleX(1.018);">Ship to:</span>
<div style="left:1136px;top:565px;width:732px;height:24.5px;background:#f5f5f5;border-radius:3px;"></div>
<span style="left:1140.7px;top:572px;font-size:12.5px;line-height:12.5px;height:12.5px;color:#222222;transform:scaleX(0.9465);">Ship to 1</span>
<svg style="left:1851px;top:575.7px;" width="9.7" height="6.7" viewBox="0 0 9.7 6.7"><path d="M0 0H9.7L4.85 6.7Z" fill="#cbcbcb"/></svg>
<svg style="left:1871.2px;top:570.8px;" width="14" height="14" viewBox="0 0 14 14"><path d="M7 0.3V13.7M0.3 7H13.7" stroke="#035c94" stroke-width="1.9" fill="none"/></svg>
<span style="left:1086.2px;top:613px;font-size:11.5px;line-height:11.5px;height:11.5px;color:#7b9cb6;transform:scaleX(0.9866);">Display</span>
<span style="left:1086.2px;top:626px;font-size:11.5px;line-height:11.5px;height:11.5px;color:#7b9cb6;transform:scaleX(0.9359);">Name:</span>
<div style="left:1136px;top:612.2px;width:752px;height:24.5px;background:#f5f5f5;border:1px solid #ebebeb;box-sizing:border-box;border-radius:3px;"></div>
<span style="left:1143.2px;top:619px;font-size:12.5px;line-height:12.5px;height:12.5px;color:#222222;transform:scaleX(0.9465);">Ship to 1</span>
<div style="left:1086px;top:647px;width:802px;height:24.7px;background:#ededed;border-radius:3px;"></div>
<span style="left:1089.9px;top:654px;font-size:12.5px;line-height:12.5px;height:12.5px;color:#adadad;transform:scaleX(0.9046);">Search address</span>
<svg style="left:1875px;top:657.5px;" width="9.7" height="6.7" viewBox="0 0 9.7 6.7"><path d="M0 0H9.7L4.85 6.7Z" fill="#cbcbcb"/></svg>
<div style="left:1086px;top:682px;width:802px;height:27.5px;background:#f5f5f5;border:1px solid #ebebeb;box-sizing:border-box;border-radius:3px;"></div>
<span style="left:1094.2px;top:693px;font-size:12.5px;line-height:12.5px;height:12.5px;color:#222222;transform:scaleX(0.9307);">2015556619</span>
<div style="left:1086px;top:720px;width:802px;height:27.5px;background:#f5f5f5;border:1px solid #ebebeb;box-sizing:border-box;border-radius:3px;"></div>
<span style="left:1094.2px;top:731px;font-size:12.5px;line-height:12.5px;height:12.5px;color:#222222;transform:scaleX(0.9811);">111 8th Avenue</span>
<div style="left:1086px;top:758px;width:802px;height:27.5px;background:#f5f5f5;border:1px solid #ebebeb;box-sizing:border-box;border-radius:3px;"></div>
<span style="left:1091.5px;top:767px;font-size:12.5px;line-height:12.5px;height:12.5px;color:#adadad;transform:scaleX(0.9198);">Address Line 2</span>
<div style="left:1086px;top:796px;width:193px;height:24.7px;background:#f5f5f5;border:1px solid #ebebeb;box-sizing:border-box;border-radius:3px;"></div>
<span style="left:1094.2px;top:803px;font-size:12.5px;line-height:12.5px;height:12.5px;color:#222222;transform:scaleX(0.9412);">New York</span>
<div style="left:1292.5px;top:796px;width:187.5px;height:24.7px;background:#f5f5f5;border-radius:3px;"></div>
<span style="left:1298.0px;top:803px;font-size:12.5px;line-height:12.5px;height:12.5px;color:#adadad;transform:scaleX(0.9371);">Zone</span>
<svg style="left:1465px;top:806px;" width="9.7" height="6.7" viewBox="0 0 9.7 6.7"><path d="M0 0H9.7L4.85 6.7Z" fill="#cbcbcb"/></svg>
<div style="left:1494px;top:796px;width:394px;height:59.7px;background:#f5f5f5;border:1px solid #ebebeb;box-sizing:border-box;border-radius:3px;"></div>
<span style="left:1499.5px;top:805px;font-size:12.5px;line-height:12.5px;height:12.5px;color:#adadad;transform:scaleX(0.9733);">Note</span>
<div style="left:1086px;top:831px;width:89px;height:24.7px;background:#f5f5f5;border:1px solid #ebebeb;box-sizing:border-box;border-radius:3px;"></div>
<span style="left:1094.2px;top:838px;font-size:12.5px;line-height:12.5px;height:12.5px;color:#222222;transform:scaleX(0.8753);">NY</span>
<div style="left:1189px;top:831px;width:90px;height:24.7px;background:#f5f5f5;border:1px solid #ebebeb;box-sizing:border-box;border-radius:3px;"></div>
<span style="left:1198.2px;top:838px;font-size:12.5px;line-height:12.5px;height:12.5px;color:#222222;transform:scaleX(0.9222);">10011</span>
<div style="left:1293.5px;top:832px;width:185px;height:23px;background:#f5f5f5;border-radius:3px;"></div>
<span style="left:1299.2px;top:838px;font-size:12.5px;line-height:12.5px;height:12.5px;color:#adadad;transform:scaleX(0.9329);">Contact Card</span>
<svg style="left:1461px;top:841.5px;" width="9.7" height="6.7" viewBox="0 0 9.7 6.7"><path d="M0 0H9.7L4.85 6.7Z" fill="#cbcbcb"/></svg>
<div style="left:1086px;top:866px;width:193px;height:24.7px;background:#f5f5f5;border:1px solid #ebebeb;box-sizing:border-box;border-radius:3px;"></div>
<span style="left:1094.2px;top:873px;font-size:12.5px;line-height:12.5px;height:12.5px;color:#222222;transform:scaleX(0.8178);">US</span>
<div style="left:1292.5px;top:866px;width:187.5px;height:24.7px;background:#f5f5f5;border:1px solid #ebebeb;box-sizing:border-box;border-radius:3px;"></div>
<span style="left:1300.7px;top:873px;font-size:12.5px;line-height:12.5px;height:12.5px;color:#222222;transform:scaleX(0.9376);">43443356789</span>
<div style="left:1494px;top:870px;width:18px;height:18px;background:#035c94;border-radius:3px;"></div>
<svg style="left:1494px;top:870px;" width="18" height="18" viewBox="0 0 18 18"><path d="M2.9 9.2L6.9 13.1L15.2 4.6" stroke="#ffffff" stroke-width="2.1" fill="none"/></svg>
<span style="left:1516.7px;top:873px;font-size:12.5px;line-height:12.5px;height:12.5px;color:#222222;transform:scaleX(0.9827);-webkit-text-stroke:0.45px #222;">Default shipping address</span>
<div style="left:1085.5px;top:918.2px;width:75px;height:24.7px;background:#eeeeee;border-radius:1.5px;"></div>
<span style="left:1104.2px;top:925px;font-size:12.0px;line-height:12.0px;height:12.0px;color:#035c94;transform:scaleX(0.7969);">DELETE</span>
<div style="left:1725px;top:918.2px;width:78px;height:24.7px;background:#c9c9c9;border-radius:1.5px;"></div>
<span style="left:1740.2px;top:925px;font-size:12.0px;line-height:12.0px;height:12.0px;color:#f3f3f3;transform:scaleX(0.8832);">DISCARD</span>
<div style="left:1813.3px;top:918.2px;width:74.8px;height:24.7px;background:#035c94;border-radius:1.5px;"></div>
<span style="left:1834.7px;top:925px;font-size:12.0px;line-height:12.0px;height:12.0px;color:#ffffff;transform:scaleX(0.8916);">APPLY</span>
<div style="left:1909.2px;top:173px;width:6.9px;height:760px;background:#d9d9d9;"></div>
<svg style="left:1908.2px;top:162.5px;" width="9" height="6" viewBox="0 0 9 6"><path d="M0.8 5L4.5 1.2L8.2 5" stroke="#e9e9e9" stroke-width="1.1" fill="none"/></svg>
<svg style="left:1908.2px;top:950px;" width="9" height="6" viewBox="0 0 9 6"><path d="M0.8 1L4.5 4.8L8.2 1" stroke="#e9e9e9" stroke-width="1.1" fill="none"/></svg>
<svg style="left:980px;top:365px;" width="110" height="50" viewBox="0 0 110 50"><path d="M9 8L90 36.4" stroke="#ff0000" stroke-width="3.3" stroke-linecap="round" fill="none"/><path d="M103.2 41.4L91.4 32.4L87.8 41Z" fill="#ff0000"/></svg>
</div></body></html>
